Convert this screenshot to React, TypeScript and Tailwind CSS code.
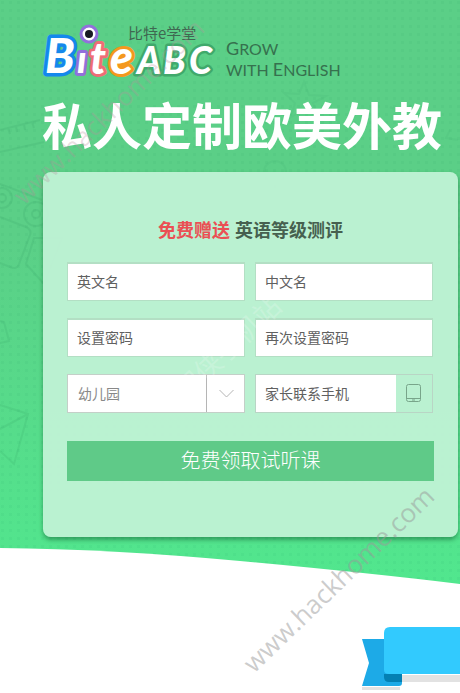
import type { InputHTMLAttributes } from "react";

interface FieldProps extends InputHTMLAttributes<HTMLInputElement> {
    label: string
}

const fieldClass = "block h-[39px] w-full min-w-0 border border-t-2 border-[#b3dfc4] bg-white px-[9px] text-sm text-[#606060] placeholder:text-[#606060] outline-none"

function Field({ label, ...rest }: FieldProps) {
    return <input aria-label={label} placeholder={label} className={fieldClass} {...rest} />
}

function Doodles() {
    return (
        <svg className="absolute inset-0 h-full w-full" aria-hidden="true" fill="none">
            <defs>
                <pattern id="dots" width="8" height="8" patternUnits="userSpaceOnUse">
                    <path d="M1 1h3v3H1z" fill="#168050" fillOpacity=".06" />
                </pattern>
            </defs>
            <rect width="100%" height="100%" fill="url(#dots)" />
            <g stroke="#218150" strokeOpacity=".1" strokeWidth="2">
                <path d="M0 130l40-10M0 152l44-10M8 128l2 6M16 126l1 6M24 124l1 6M32 122l2 6" />
                <circle cx="2" cy="198" r="10" />
                <circle cx="2" cy="198" r="4" />
                <circle cx="36" cy="214" r="12" />
                <circle cx="36" cy="214" r="4" />
                <path d="M0 184l42 16M0 217l26 10q6 3 4 8l-11 29q-2 6-9 3L0 263M34 238h28l-18 46-18-20zM0 321l4 1 5 19-9 2" />
                <path d="M0 405l28 9-14 50L0 451M28 414L0 429" />
                <path d="M304 82l5 13 17 1-13 7 5 14-13-8-14 8 4-14-11-10 15 1zM275 161a11 11 0 1 0 0 22 11 11 0 1 0 0-22M275 183v10M390 107l10 5 10-6-2 11 8 8M450 130l-4 8 12 2" strokeOpacity=".06" />
            </g>
        </svg>
    )
}

function Logo() {
    return (
        <svg className="h-[60px] w-[176px] shrink-0 overflow-visible" viewBox="0 0 176 60" role="img" aria-label="BiteABC">
            <g fontFamily="Lato, sans-serif" fontStyle="italic" fontWeight="900" paintOrder="stroke" strokeLinejoin="round" fill="#fff">
                <text x="3" y="52" fontSize="48" stroke="#1488ec" strokeWidth="7">B</text>
                <text x="35" y="52" fontSize="38" stroke="#9270dc" strokeWidth="6">ı</text>
                <text x="48" y="53" fontSize="43" stroke="#ef6d77" strokeWidth="6">t</text>
                <text x="68" y="53" fontSize="47" stroke="#f4981e" strokeWidth="6">e</text>
                <text x="95" y="53" fontSize="37" stroke="#40a96b" strokeWidth="5">A</text>
                <text x="121" y="53" fontSize="37" stroke="#40a96b" strokeWidth="5">B</text>
                <text x="147" y="53" fontSize="37" stroke="#40a96b" strokeWidth="5">C</text>
            </g>
            {/* eyeball that dots the i */}
            <circle cx="47" cy="13" r="8" fill="#fff" stroke="#9270dc" strokeWidth="3" />
            <circle cx="47" cy="13" r="4" fill="#171923" />
            <text x="86" y="18" fontSize="15" fontFamily="'Noto Sans CJK SC', sans-serif" fill="#3f6851">比特e学堂</text>
        </svg>
    )
}

function Ribbon() {
    return (
        <svg className="h-[66px] w-[98px]" viewBox="0 0 98 66" aria-hidden="true">
            <path d="M0 60h38v3H0zM40 48h58v7H40z" fill="#e2e2e2" />
            <path d="M0 12h40v44q0 3-3 3H0l7-23z" fill="#1daae7" />
            <path d="M22 47h18v8H27q-5 0-5-5z" fill="#0480b3" />
            <path d="M98 0H28q-6 0-6 6v37q0 4 5 4h71z" fill="#32cafe" />
        </svg>
    )
}

function Watermarks() {
    return (
        <svg className="pointer-events-none absolute inset-0 h-full w-full" aria-hidden="true" fontFamily="'Open Sans', 'Noto Sans CJK SC', sans-serif">
            <text transform="translate(254 674) rotate(-44)" fontSize="26" fill="#999" fillOpacity=".5">www.hackhome.com</text>
            <text transform="translate(24 206) rotate(-44)" fontSize="26" fill="#b98e9e" fillOpacity=".3">www.hackhome.com</text>
            <text transform="translate(186 402) rotate(-44)" fontSize="27" fill="#fff" fillOpacity=".2">网侠手机站</text>
        </svg>
    )
}

function App() {
    return (
        <main className="relative overflow-hidden bg-white font-['Liberation_Sans','Noto_Sans_CJK_SC',sans-serif]">
            <section className="relative bg-linear-to-b from-[#5bcf87] from-40% to-[#51e78e]">
                <Doodles />
                <div className="relative pt-[21px] pr-[2px] pl-[42px]">
                    <header className="flex items-end gap-2">
                        <Logo />
                        <p className="pb-[1px] font-[Lato] text-base leading-5 whitespace-nowrap text-[#36714e] uppercase">
                            <span className="text-lg leading-5">G</span>row<br />
                            with <span className="text-lg leading-5">E</span>nglish
                        </p>
                    </header>
                    <h1 className="mt-[17px] text-[50px] leading-[60px] font-bold whitespace-nowrap text-white">私人定制欧美外教</h1>
                    <form className="mt-[14px] ml-px rounded-lg bg-[#c0f2d5]/95 px-6 pt-11 pb-14 shadow-[0_3px_4px_#0b4b2770]" onSubmit={(e) => e.preventDefault()}>
                        <h2 className="text-center text-lg leading-[30px] font-bold text-[#46604f]"><span className="text-[#ea5054]">免费赠送</span> 英语等级测评</h2>
                        <div className="mt-4 grid grid-cols-2 gap-x-[10px] gap-y-[17px] pr-px">
                            <Field label="英文名" />
                            <Field label="中文名" />
                            <Field label="设置密码" type="password" />
                            <Field label="再次设置密码" type="password" />
                            <div className="relative">
                                <select aria-label="年级" className="block h-[39px] w-full appearance-none border border-[#c4cfc8] bg-white px-[10px] text-sm text-[#888] outline-none">
                                    <option>幼儿园</option>
                                </select>
                                <svg className="pointer-events-none absolute top-0 right-0 h-[39px] w-[39px]" viewBox="0 0 39 39" fill="none" stroke="#b5b5b5" aria-hidden="true">
                                    <path d="M.5 1v37M13.5 16l7 7 7-7" />
                                </svg>
                            </div>
                            <div className="flex border border-[#b9d5c5]">
                                <input type="tel" aria-label="家长联系手机" placeholder="家长联系手机" className="h-[37px] min-w-0 flex-1 bg-white px-[9px] text-sm text-[#606060] outline-none placeholder:text-[#606060]" />
                                <span className="flex w-9 items-center justify-center">
                                    <svg className="h-[19px] w-4" viewBox="0 0 16 19" fill="none" stroke="#78a58a" aria-hidden="true">
                                        <rect x=".5" y=".5" width="14" height="17" rx="2" />
                                        <path d="M1 14.5h13M6 16h3" />
                                    </svg>
                                </span>
                            </div>
                        </div>
                        <button type="submit" className="mt-[28px] block h-10 w-full bg-[#5fca88] text-xl font-light text-white">免费领取试听课</button>
                    </form>
                </div>
                <svg className="relative block h-[47px] w-full" viewBox="0 0 460 47" preserveAspectRatio="none" aria-hidden="true">
                    <path d="M0 11Q110 12 240 24T460 47H0z" fill="#fff" />
                </svg>
            </section>
            <div className="flex justify-end pt-[43px] pb-1">
                <Ribbon />
            </div>
            <Watermarks />
        </main>
    )
}

export default App
